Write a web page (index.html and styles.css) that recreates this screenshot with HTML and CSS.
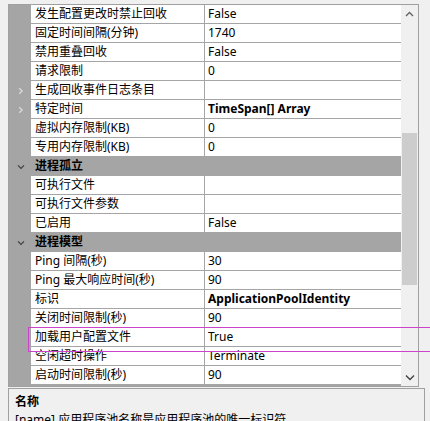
FILE: index.html
```html
<!DOCTYPE html>
<html lang="zh-CN">
<head>
    <meta charset="UTF-8">
    <title>高级设置</title>
    <link rel="stylesheet" href="styles.css">
</head>
<body>
    <div class="window">
        <div class="grid">
            <div class="rows">
                <div class="row"><span class="gutter"></span><span class="name">发生配置更改时禁止回收</span><span class="value">False</span></div>
                <div class="row"><span class="gutter"></span><span class="name">固定时间间隔(分钟)</span><span class="value">1740</span></div>
                <div class="row"><span class="gutter"></span><span class="name">禁用重叠回收</span><span class="value">False</span></div>
                <div class="row"><span class="gutter"></span><span class="name">请求限制</span><span class="value">0</span></div>
                <div class="row">
                    <span class="gutter"><svg class="expand" width="6" height="8" viewBox="0 0 6 8"><path d="M1.2 1.2L4.2 4L1.2 6.8" /></svg></span>
                    <span class="name">生成回收事件日志条目</span><span class="value"></span>
                </div>
                <div class="row">
                    <span class="gutter"><svg class="expand" width="6" height="8" viewBox="0 0 6 8"><path d="M1.2 1.2L4.2 4L1.2 6.8" /></svg></span>
                    <span class="name">特定时间</span><span class="value strong">TimeSpan[] Array</span>
                </div>
                <div class="row"><span class="gutter"></span><span class="name">虚拟内存限制(KB)</span><span class="value">0</span></div>
                <div class="row"><span class="gutter"></span><span class="name">专用内存限制(KB)</span><span class="value">0</span></div>

                <div class="row category">
                    <span class="gutter"><svg class="collapse" width="8" height="6" viewBox="0 0 8 6"><path d="M1 1.3L4 4.3L7 1.3" /></svg></span>
                    <span class="cat-name">进程孤立</span>
                </div>
                <div class="row"><span class="gutter"></span><span class="name">可执行文件</span><span class="value"></span></div>
                <div class="row"><span class="gutter"></span><span class="name">可执行文件参数</span><span class="value"></span></div>
                <div class="row"><span class="gutter"></span><span class="name">已启用</span><span class="value">False</span></div>

                <div class="row category">
                    <span class="gutter"><svg class="collapse" width="8" height="6" viewBox="0 0 8 6"><path d="M1 1.3L4 4.3L7 1.3" /></svg></span>
                    <span class="cat-name">进程模型</span>
                </div>
                <div class="row"><span class="gutter"></span><span class="name">Ping 间隔(秒)</span><span class="value">30</span></div>
                <div class="row"><span class="gutter"></span><span class="name">Ping 最大响应时间(秒)</span><span class="value">90</span></div>
                <div class="row"><span class="gutter"></span><span class="name">标识</span><span class="value strong">ApplicationPoolIdentity</span></div>
                <div class="row"><span class="gutter"></span><span class="name">关闭时间限制(秒)</span><span class="value">90</span></div>
                <div class="row"><span class="gutter"></span><span class="name">加载用户配置文件</span><span class="value">True</span></div>
                <div class="row"><span class="gutter"></span><span class="name">空闲超时操作</span><span class="value">Terminate</span></div>
                <div class="row"><span class="gutter"></span><span class="name">启动时间限制(秒)</span><span class="value">90</span></div>
            </div>

            <div class="scrollbar">
                <div class="sb-btn"><svg width="9" height="6" viewBox="0 0 9 6"><path d="M1 5L4.5 1.5L8 5" /></svg></div>
                <div class="sb-track"><div class="sb-thumb"></div></div>
                <div class="sb-btn down"><svg width="10" height="7" viewBox="0 0 10 7"><path d="M1 1.5L5 5.5L9 1.5" /></svg></div>
            </div>
        </div>

        <div class="desc">
            <div class="desc-title">名称</div>
            <div class="desc-text">[name] 应用程序池名称是应用程序池的唯一标识符。</div>
        </div>

        <!-- marker drawn over the selected row -->
        <div class="highlight"></div>
    </div>
</body>
</html>
```

FILE: styles.css
```css
body {
    margin: 0;
    padding: 0;
    background-color: #f0f0f0;
    font-family: 'Noto Sans', 'Noto Sans CJK SC', sans-serif;
    font-size: 12px;
    color: #000;
}
.window {
    position: relative;
    width: 430px;
    height: 421px;
    overflow: hidden;
}
.grid {
    display: flex;
    margin: 4px 0 0 8px;
    width: 409px;
    height: 381px;
    border: 1px solid #a0a0a0;
    background-color: #a5a5a5;
}
.rows {
    width: 392px;
    display: flex;
    flex-direction: column;
    background-color: #a5a5a5;
}
.row {
    display: flex;
    height: 19px;
    line-height: 18px;
    flex-shrink: 0;
}
.gutter {
    width: 22px;
    flex-shrink: 0;
    display: flex;
    align-items: center;
    padding-left: 9px;
    box-sizing: border-box;
}
.gutter svg {
    fill: none;
    stroke-width: 1.2;
}
.expand {
    stroke: #dcdcdc;
}
.collapse {
    stroke: #3f3f3f;
    margin-left: -1px;
}
.name {
    width: 174px;
    flex-shrink: 0;
    padding-left: 4px;
    box-sizing: border-box;
    background-color: #fff;
    border-bottom: 1px solid #a5a5a5;
    border-right: 1px solid #a5a5a5;
    white-space: nowrap;
    overflow: hidden;
}
.value {
    flex: 1;
    padding-left: 3px;
    background-color: #fff;
    border-bottom: 1px solid #a5a5a5;
    white-space: nowrap;
    overflow: hidden;
}
.value.strong {
    font-weight: bold;
}
.category .cat-name {
    padding-left: 4px;
    font-weight: bold;
}
.scrollbar {
    width: 17px;
    display: flex;
    flex-direction: column;
    background-color: #f0f0f0;
}
.sb-btn {
    height: 17px;
    display: flex;
    justify-content: center;
    align-items: center;
    flex-shrink: 0;
}
.sb-btn svg {
    fill: none;
    stroke: #606060;
    stroke-width: 1.3;
}
.sb-btn.down svg {
    stroke: #404040;
}
.sb-track {
    flex: 1;
    padding: 0 1px 0 1px;
}
.sb-thumb {
    margin-top: 111px;
    height: 152px;
    background-color: #cdcdcd;
}
.desc {
    margin: 1px 0 0 8px;
    width: 409px;
    height: 40px;
    border: 1px solid #a0a0a0;
    padding: 4px 0 0 6px;
    box-sizing: content-box;
    line-height: 18px;
}
.desc-title {
    font-weight: bold;
}
.desc-text {
    white-space: nowrap;
}
.highlight {
    position: absolute;
    left: 28px;
    top: 327px;
    width: 420px;
    height: 23px;
    border: 1px solid #cc44cc;
}
```
